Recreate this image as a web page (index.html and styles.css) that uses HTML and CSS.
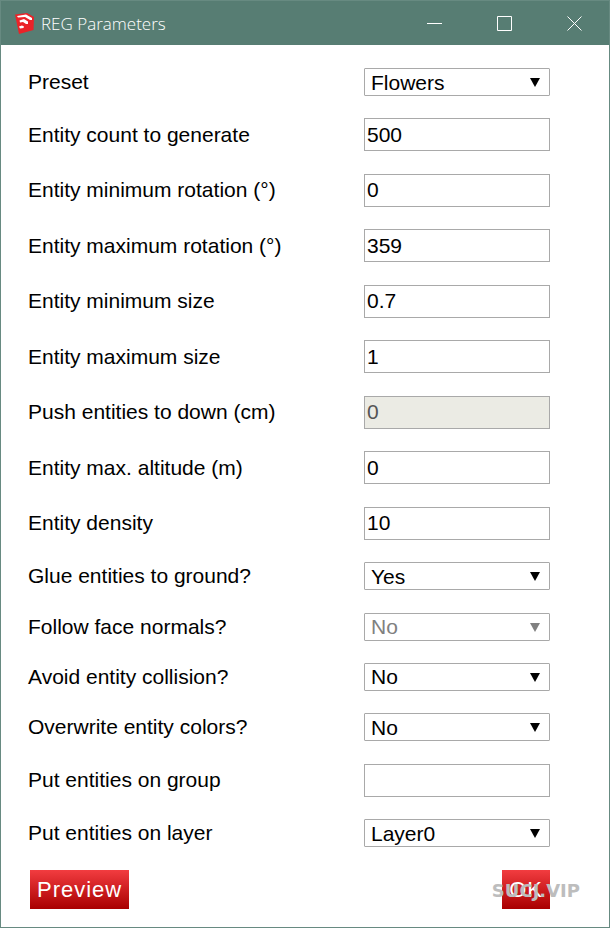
FILE: index.html
```html
<!DOCTYPE html>
<html lang="en">
<head>
    <meta charset="UTF-8">
    <meta name="viewport" content="width=device-width, initial-scale=1.0">
    <title>REG Parameters</title>
    <link rel="stylesheet" href="styles.css">
</head>
<body>

    <header class="titlebar">
        <svg class="app-icon" viewBox="0 0 19 21" width="19" height="21" aria-hidden="true">
            <path d="M0 1.5 L12 0 L19 4 L18.5 17 L4 21 Z" fill="#ea2328"/>
            <path d="M2 3 L11 1.5 L17 5 L17 7 L15 7 L10 4 L3 4.5 Z" fill="#fff"/>
            <path d="M4.5 7.5 L9 6 L13 8.5 L13 11 L11 11 L8 9 L5 9.5 Z" fill="#fff"/>
            <path d="M4 13.5 L7 12.5 L9 13.5 L8.5 15 L5 15.5 Z" fill="#fff"/>
        </svg>
        <h1>REG Parameters</h1>
        <div class="window-buttons">
            <button type="button" aria-label="Minimize">
                <svg viewBox="0 0 15 15" width="15" height="15"><path d="M0 7.5H15"/></svg>
            </button>
            <button type="button" aria-label="Maximize">
                <svg viewBox="0 0 15 15" width="15" height="15"><path d="M.5 .5H14.5V14.5H.5Z"/></svg>
            </button>
            <button type="button" aria-label="Close">
                <svg viewBox="0 0 15 15" width="15" height="15"><path d="M.5 .5L14.5 14.5M14.5 .5L.5 14.5"/></svg>
            </button>
        </div>
    </header>

    <form class="parameters">
        <div class="row">
            <label for="preset">Preset</label>
            <div class="select"><select id="preset"><option>Flowers</option></select></div>
        </div>
        <div class="row">
            <label for="count">Entity count to generate</label>
            <input type="text" id="count" value="500">
        </div>
        <div class="row">
            <label for="min-rotation">Entity minimum rotation (°)</label>
            <input type="text" id="min-rotation" value="0">
        </div>
        <div class="row">
            <label for="max-rotation">Entity maximum rotation (°)</label>
            <input type="text" id="max-rotation" value="359">
        </div>
        <div class="row">
            <label for="min-size">Entity minimum size</label>
            <input type="text" id="min-size" value="0.7">
        </div>
        <div class="row">
            <label for="max-size">Entity maximum size</label>
            <input type="text" id="max-size" value="1">
        </div>
        <div class="row">
            <label for="push-down">Push entities to down (cm)</label>
            <input type="text" id="push-down" value="0" disabled>
        </div>
        <div class="row">
            <label for="altitude">Entity max. altitude (m)</label>
            <input type="text" id="altitude" value="0">
        </div>
        <div class="row">
            <label for="density">Entity density</label>
            <input type="text" id="density" value="10">
        </div>
        <div class="row">
            <label for="glue">Glue entities to ground?</label>
            <div class="select"><select id="glue"><option>Yes</option><option>No</option></select></div>
        </div>
        <div class="row">
            <label for="normals">Follow face normals?</label>
            <div class="select disabled"><select id="normals" disabled><option>No</option><option>Yes</option></select></div>
        </div>
        <div class="row">
            <label for="collision">Avoid entity collision?</label>
            <div class="select"><select id="collision"><option>No</option><option>Yes</option></select></div>
        </div>
        <div class="row">
            <label for="colors">Overwrite entity colors?</label>
            <div class="select"><select id="colors"><option>No</option><option>Yes</option></select></div>
        </div>
        <div class="row">
            <label for="group">Put entities on group</label>
            <input type="text" id="group">
        </div>
        <div class="row">
            <label for="layer">Put entities on layer</label>
            <div class="select"><select id="layer"><option>Layer0</option></select></div>
        </div>
        <div class="actions">
            <button type="button">Preview</button>
            <button type="submit">OK</button>
        </div>
    </form>

    <div class="watermark">SUCJ.VIP</div>

</body>
</html>
```
FILE: styles.css
```css
* {
    box-sizing: border-box;
}

body {
    display: flex;
    flex-direction: column;
    position: relative;
    min-height: 100vh;
    margin: 0;
    border: 1px solid #678a81;
    background: #fff;
    color: #000;
    font-family: Arial, "Liberation Sans", sans-serif;
    font-size: 21px;
}

/* Title bar */
.titlebar {
    display: flex;
    align-items: center;
    height: 44px;
    padding-left: 14px;
    background: #577d73;
    color: #fff;
}

.titlebar h1 {
    flex: 1;
    margin: 0 0 0 7px;
    font-family: "Segoe UI", "Open Sans", sans-serif;
    font-size: 17px;
    font-weight: 300;
}

.window-buttons {
    display: flex;
}

.window-buttons button {
    display: flex;
    align-items: center;
    justify-content: center;
    width: 70px;
    height: 44px;
    padding: 0;
    border: none;
    background: none;
}

.window-buttons svg {
    fill: none;
    stroke: #fff;
    stroke-width: 1;
}

/* Form */
.parameters {
    display: flex;
    flex: 1;
    flex-direction: column;
    justify-content: space-between;
    padding: 23px 59px 18px 27px;
}

.row {
    display: flex;
    align-items: center;
    justify-content: space-between;
}

.row label {
    line-height: 24px;
}

.row input,
.select {
    width: 186px;
}

.row input,
.row select {
    border: 1px solid #a9a9a9;
    background: #fff;
    color: #000;
    font-family: inherit;
    font-size: 21px;
}

.row input {
    height: 33px;
    padding: 0 2px;
}

.row input:disabled {
    background: #ebebe4;
    color: #545454;
}

.select {
    position: relative;
    height: 28px;
}

.row select {
    display: block;
    appearance: none;
    width: 100%;
    height: 28px;
    padding: 0 6px;
    border-radius: 1px;
}

.row select:disabled {
    color: #808080;
    opacity: 1;
}

/* Drop-down arrow */
.select::after {
    content: "";
    position: absolute;
    top: 10px;
    right: 10px;
    border: 5px solid transparent;
    border-top: 9px solid #000;
    border-bottom: none;
    pointer-events: none;
}

.select.disabled::after {
    border-top-color: #808080;
}

/* Buttons */
.actions {
    display: flex;
    justify-content: space-between;
    padding-left: 2px;
}

.actions button {
    height: 39px;
    padding: 2px 7px 0;
    border: none;
    background: linear-gradient(#f23c40, #a90000);
    color: #fff;
    font-family: inherit;
    font-size: 22px;
    letter-spacing: 1px;
}

.watermark {
    position: absolute;
    right: 29px;
    bottom: 25px;
    color: #bdbdbd;
    font-family: "DejaVu Sans", sans-serif;
    font-size: 18px;
    font-weight: bold;
    line-height: 22px;
    pointer-events: none;
}
```
